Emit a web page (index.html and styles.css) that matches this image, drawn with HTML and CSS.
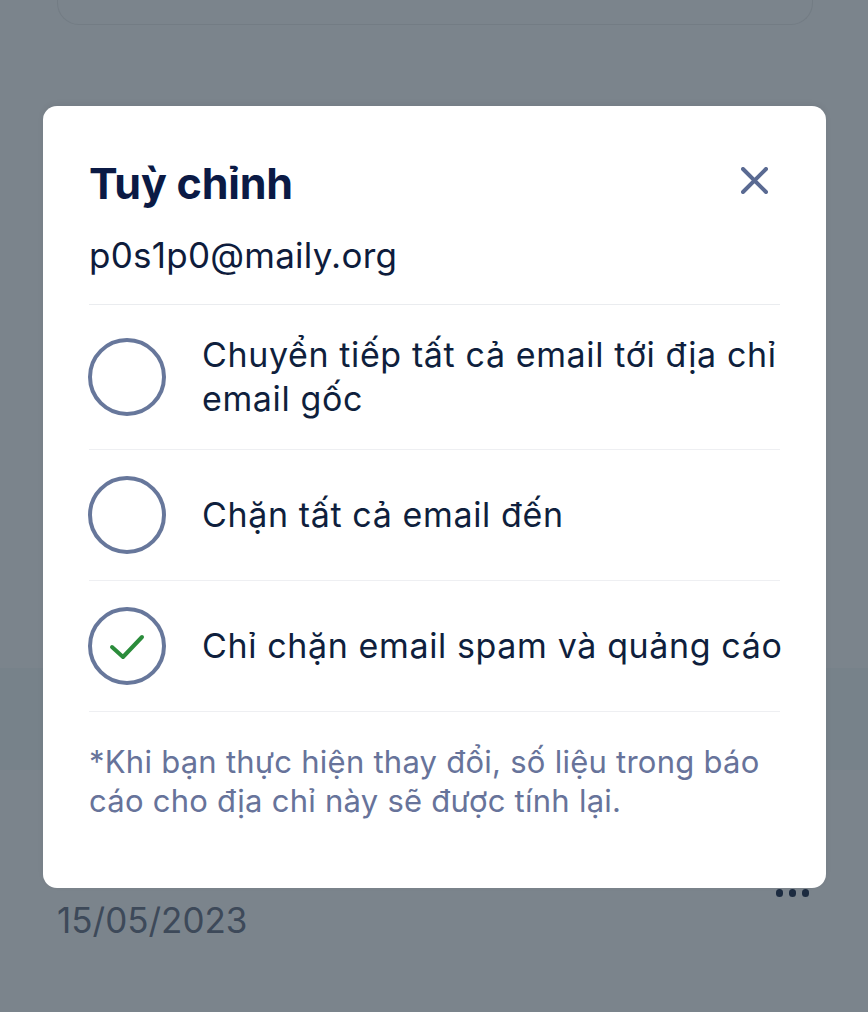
FILE: index.html
```html
<!DOCTYPE html>
<html lang="vi">
<head>
<meta charset="utf-8">
<title>Tuỳ chỉnh</title>
<link rel="stylesheet" href="styles.css">
</head>
<body>
<div class="page">
  <div class="bg-card"></div>
  <div class="bg-band"></div>
  <div class="bg-row">
    <span class="bg-date">15/05/2023</span>
    <span class="bg-dots"><i></i><i></i><i></i></span>
  </div>

  <div class="modal">
    <div class="modal-head">
      <h1 class="modal-title">Tuỳ chỉnh</h1>
      <button class="close-btn" aria-label="Đóng">
        <svg width="27" height="27" viewBox="0 0 27 27"><path d="M2 2 L25 25 M25 2 L2 25" stroke="#5a6a92" stroke-width="4" stroke-linecap="round" fill="none"/></svg>
      </button>
    </div>
    <div class="modal-email">p0s1p0@maily.org</div>
    <div class="options">
      <div class="option">
        <span class="radio"></span>
        <span class="option-text">Chuyển tiếp tất cả email tới địa chỉ email gốc</span>
      </div>
      <div class="option">
        <span class="radio"></span>
        <span class="option-text">Chặn tất cả email đến</span>
      </div>
      <div class="option">
        <span class="radio">
          <svg width="40" height="40" viewBox="0 0 40 40"><path d="M5 21 L16 31 L35 11" stroke="#2b8c3b" stroke-width="4" stroke-linecap="round" stroke-linejoin="round" fill="none"/></svg>
        </span>
        <span class="option-text">Chỉ chặn email spam và quảng cáo</span>
      </div>
    </div>
    <p class="note">*Khi bạn thực hiện thay đổi, số liệu trong báo cáo cho địa chỉ này sẽ được tính lại.</p>
  </div>
</div>
</body>
</html>
```

FILE: styles.css
```css
html, body {
  margin: 0;
  padding: 0;
}
body {
  background: #7b848c;
  font-family: Inter, "Noto Sans", "DejaVu Sans", sans-serif;
}
.page {
  position: relative;
  width: 868px;
  height: 1012px;
  overflow: hidden;
}
.bg-card {
  margin: -30px 55px 0 57px;
  height: 54px;
  border: 1.5px solid #737c84;
  border-top: none;
  border-radius: 0 0 22px 22px;
}
.bg-band {
  margin-top: 643px;
  height: 102px;
  background: #77828a;
}
.bg-row {
  display: flex;
  justify-content: space-between;
  align-items: flex-start;
  padding: 0 59px 0 57px;
}
.bg-date {
  margin-top: 130px;
  font-size: 35px;
  line-height: 40px;
  color: #3d4959;
}
.bg-dots {
  display: flex;
  gap: 5.5px;
  margin-top: 119px;
}
.bg-dots i {
  display: block;
  width: 7.5px;
  height: 7.5px;
  border-radius: 50%;
  background: #1c2b40;
}

.modal {
  position: absolute;
  left: 43px;
  top: 106px;
  width: 783px;
  height: 782px;
  box-sizing: border-box;
  background: #ffffff;
  border-radius: 14px;
  padding: 52px 46px 0 46px;
  box-shadow: 0 -2px 6px rgba(0, 0, 0, 0.05);
}
.modal-head {
  display: flex;
  justify-content: space-between;
  align-items: center;
  height: 50px;
}
.modal-title {
  margin: 0;
  font-size: 43px;
  line-height: 50px;
  font-weight: 700;
  color: #0b1a45;
  letter-spacing: -0.2px;
}
.close-btn {
  border: none;
  background: none;
  padding: 0;
  margin: -5px 12px 0 0;
  width: 27px;
  height: 27px;
  display: flex;
}
.modal-email {
  margin-top: 27px;
  font-size: 35px;
  line-height: 40px;
  color: #0e1c3c;
  letter-spacing: 0.25px;
  padding-bottom: 29px;
  border-bottom: 1.5px solid #eaecef;
}
.option {
  display: flex;
  align-items: center;
  gap: 36px;
  padding: 28px 0;
  border-bottom: 1.5px solid #eeeff2;
}
.radio {
  flex: none;
  width: 78px;
  height: 78px;
  margin: -2px 0 -2px -1px;
  box-sizing: border-box;
  border: 4px solid #67779b;
  border-radius: 50%;
  display: flex;
  align-items: center;
  justify-content: center;
}
.option-text {
  flex: 1;
  margin-right: -16px;
  font-size: 34px;
  line-height: 44px;
  letter-spacing: 0.62px;
  color: #0f1f3d;
}
.note {
  margin: 30px 0 0;
  font-size: 31px;
  line-height: 39px;
  letter-spacing: 0.25px;
  color: #67739a;
}
```
